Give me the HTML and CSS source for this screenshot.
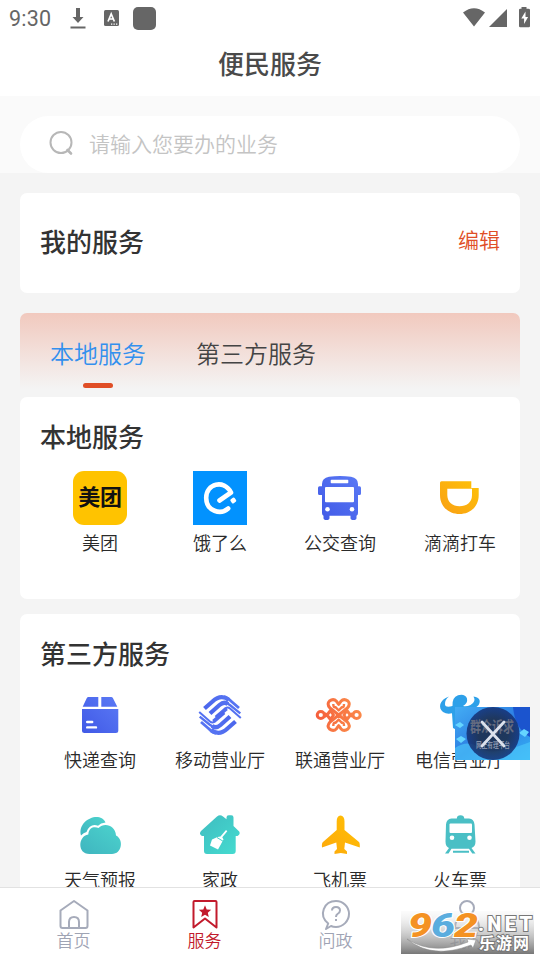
FILE: index.html
```
<!DOCTYPE html>
<html lang="zh-CN">
<head>
<meta charset="utf-8">
<title>便民服务</title>
<link rel="stylesheet" href="styles.css">
</head>
<body>
<svg width="0" height="0" class="defs">
  <defs>
    <linearGradient id="blue" x1="0" y1="1" x2="1" y2="0"><stop offset="0" stop-color="#4059e6"/><stop offset="1" stop-color="#5b7af5"/></linearGradient>
    <linearGradient id="blue-line" gradientUnits="userSpaceOnUse" x1="6" y1="48" x2="48" y2="6"><stop offset="0" stop-color="#4059e6"/><stop offset="1" stop-color="#5b7af5"/></linearGradient>
    <linearGradient id="teal" x1="1" y1="0" x2="0" y2="1"><stop offset="0" stop-color="#4cd3cd"/><stop offset="1" stop-color="#3fb5bf"/></linearGradient>
    <linearGradient id="house" x1="0" y1="0" x2="1" y2="1"><stop offset="0" stop-color="#3fbcc0"/><stop offset="1" stop-color="#45dcd0"/></linearGradient>
    <linearGradient id="gold" x1="0" y1="1" x2="1" y2="0"><stop offset="0" stop-color="#f99f14"/><stop offset="1" stop-color="#fec208"/></linearGradient>
    <linearGradient id="plane" x1="0" y1="1" x2="1" y2="0"><stop offset="0" stop-color="#fda90c"/><stop offset="1" stop-color="#ffc004"/></linearGradient>
    <linearGradient id="knot" gradientUnits="userSpaceOnUse" x1="4" y1="40" x2="46" y2="14"><stop offset="0" stop-color="#f4583a"/><stop offset="1" stop-color="#fb8d4a"/></linearGradient>
    <linearGradient id="shade" x1="0" y1="0" x2="0" y2="1"><stop offset="0" stop-color="#ddd" stop-opacity=".1"/><stop offset="1" stop-color="#777"/></linearGradient>
  </defs>
</svg>
<div class="screen">
  <header class="status">
    <span class="time">9:30</span>
    <svg class="s-down" width="16" height="22" viewBox="0 0 16 22"><path d="M6 0h4v9h3.500L8 15 2.500 9H6zM.5 18.500h15v2H.5z"/></svg>
    <svg class="s-lang" width="15" height="16" viewBox="0 0 15 16"><rect width="15" height="16" rx="1.500"/><path d="M4 11.500 7.200 4l3.200 7.500M5.200 9h4" fill="none" stroke="#fff" stroke-width="1.700"/><path d="M7 13.500h1.300v1.200H7zm2.500 0h1.300v1.200H9.500zm2.500 0h1.300v1.200H12z" fill="#fff"/></svg>
    <i class="s-box"></i>
    <span class="grow"></span>
    <svg class="s-right" width="68" height="22" viewBox="0 0 68 22"><path d="M0 5.500Q11-3 22 5.500L11 19.500zM26 20 44 2v18z"/><path d="M58.500 0h5v1.800h2q1.500 0 1.500 1.200v16q0 1.200-1.200 1.200h-8.600Q56 20.200 56 19V3q0-1.200 1.200-1.200h1.300z"/><path d="m62.500 4.500-4.200 7h2.800V17l4-7h-2.600z" fill="#fff"/></svg>
  </header>
  <h1>便民服务</h1>
  <div class="search-wrap">
    <div class="search">
      <svg width="26" height="26" viewBox="0 0 26 26"><circle cx="13" cy="12.500" r="10.500"/><path d="m19.500 20 3.500 3.500" stroke-width="2.600"/></svg>
      <span>请输入您要办的业务</span>
    </div>
  </div>
  <main>
    <section class="card mine"><h2>我的服务</h2><span class="edit">编辑</span></section>
    <nav class="tabs"><span class="tab active">本地服务</span><span class="tab">第三方服务</span></nav>
    <section class="card local">
      <h2>本地服务</h2>
      <div class="grid">
        <div class="item"><span class="meituan">美团</span><b>美团</b></div>
        <div class="item"><svg viewBox="0 0 54 54"><path fill="#0292fe" d="M0 0h54v54H0z"/><path d="M26.500 29.500 38 21.500C31 8 13 12.500 13.200 27c.3 13.500 14.500 17 22 10.500" fill="none" stroke="#fff" stroke-width="4.600" stroke-linejoin="round" stroke-linecap="round"/><rect x="37.800" y="27" width="5" height="5" rx="1.300" fill="#fff" transform="rotate(-35 40.300 29.500)"/></svg><b>饿了么</b></div>
        <div class="item"><svg viewBox="0 0 54 54"><path fill="url(#blue)" d="M16 5.800Q27 4 38 5.800 45 7 45 13v2.300h1.500Q48 15.300 48 17v5.500q0 1.500-1.500 1.500H45v18q0 2-1.500 2.700V47q0 2-3 2t-3-2v-2.300h-21V47q0 2-3 2t-3-2v-2.300Q9 44 9 42V24H6.500Q5 24 5 22.500V17q0-1.700 1.500-1.700H9V13q0-6 7-7.200z"/><path fill="#fff" d="M18.500 8.700h16q.8 0 .8.800v2q0 .8-.8.800h-16q-.8 0-.8-.8v-2q0-.8.800-.8zM13 16h27q1 0 1 1v13.300q0 1-1 1H13q-1 0-1-1V17q0-1 1-1z"/><circle cx="14.500" cy="38.300" r="2.300" fill="#fff"/><circle cx="39" cy="38.300" r="2.300" fill="#fff"/></svg><b>公交查询</b></div>
        <div class="item"><svg viewBox="0 0 54 54"><path fill="url(#gold)" d="M8.500 10.300h29.800v6.700h7.400v7C45.700 36 37 43 26.500 43S7 36 7 24V11.800q0-1.500 1.500-1.500z"/><path fill="#fff" d="M14.300 17.700H39V24c0 7.500-5.500 11.300-12.500 11.300S14.300 31 14.300 24z"/></svg><b>滴滴打车</b></div>
      </div>
    </section>
    <section class="card third">
      <h2>第三方服务</h2>
      <div class="grid">
        <div class="item"><svg viewBox="0 0 54 54"><path fill="url(#blue)" d="M15.500 9h9.800v9.700H9.700l4-8.500Q14.300 9 15.500 9zM28.300 9h9.900q1.200 0 1.800 1.200l4.300 8.500h-16zM9 21h36.300v21.500q0 2.500-2.500 2.500H11.500Q9 45 9 42.500z"/><path d="M14.200 34h5M14.200 39.400h8.800" stroke="#fff" stroke-width="2.400" stroke-linecap="round"/></svg><b>快递查询</b></div>
        <div class="item"><svg viewBox="0 0 54 54"><defs><g id="strands"><path stroke-width="4.200" d="m11.500 20.500 8-7Q28 5.500 36 12"/><path stroke-width="2.800" d="M31 8.500q4 1 7.500 5L46 20"/><path stroke-width="4.200" d="m17 25.500 9.500-8.500q4.500-4 8.500-1"/><path stroke-width="2.300" d="m33.500 14.800 4 2.700 9.800 7.800"/><path stroke-width="4" d="m23 29.500 10.500-9"/><path stroke-width="2" d="m32.500 20.500q2-2 4.500 0l10.800 9.500"/></g></defs><g fill="none" stroke="url(#blue-line)"><use href="#strands"/><use href="#strands" transform="rotate(180 27 27)"/></g></svg><b>移动营业厅</b></div>
        <div class="item"><svg viewBox="0 0 54 54"><defs><g id="heart"><path d="M25.700 27 17 20q-3.500-4-.5-7 4-3 7 .3l2.200 3 2.200-3q3-3.300 7-.3 3 3-.5 7z"/><path stroke-width="2.400" d="M20.300 16q0 4 2.200 3.200l3.200 3.300 3.200-3.300Q31 20 31 16"/></g></defs><g fill="none" stroke="url(#knot)" stroke-width="3" stroke-linejoin="round"><use href="#heart"/><use href="#heart" transform="matrix(1 0 0 -1 0 54)"/><circle cx="7.800" cy="27" r="3.600"/><circle cx="43.600" cy="27" r="3.600"/><path d="m11.500 25.500 2.500 1.500-2.500 1.500M17.500 22.500 14 27l3.500 4.500 3-4.500zM39.900 25.500 37.400 27l2.500 1.500M33.900 22.500l3.500 4.500-3.500 4.500-3-4.500z"/></g></svg><b>联通营业厅</b></div>
        <div class="item"><svg viewBox="0 0 54 54"><path fill="#2da0e9" d="M16 8.500C6 12 5 20 10 24q4 2.500 9 1.200L20 40l10 5 4-24C42 22 48 17 46.500 12q-1-3-6-3.500 3 5-3 8.500-4 2-7.500 1Q35 15 34 10.500 32 5.500 25 7.300q-6 2-5.500 10.700-7 2-7.500-1.500Q11.500 12 16 8.500z"/></svg><b>电信营业厅</b></div>
        <div class="item"><svg viewBox="0 0 54 54"><path fill="url(#teal)" d="M8 27.500C4 12 27 2.500 32.500 14.500q-5 .5-7.500 3.200-8-2.700-11.500 6.300-3 .7-5.500 3.500z"/><path fill="url(#teal)" d="M16.500 46C4 46 5 28 15.300 26.500 16 18.500 22 18.500 25.500 20c5.500-6 17-3 17.500 7.500C51 31.500 49 46 39 46z"/></svg><b>天气预报</b></div>
        <div class="item"><svg viewBox="0 0 54 54"><path fill="url(#house)" d="M24 8.500q3-2.500 6 0l3.500 2.800V9.500q0-2.200 2.300-2.200h2.500q2.200 0 2.200 2.200V18l5.700 5.500q1.500 2.500-1.700 4.500h-1.800v15q0 3-3 3H14q-3 0-3-3V28H9Q5.500 26 8 23z"/><path fill="#fff" d="m33 22 1.300 1.300-5 6 1.200 2.200-3 5.500L25 41.500 17 37.500l2-6 5.500-2.500 3-.5z"/><path d="m24 29.500 6.500 4" stroke="#44cfc8"/></svg><b>家政</b></div>
        <div class="item"><svg viewBox="0 0 54 54"><path fill="url(#plane)" d="M27.500 7.500q4 .5 4 6V22L46 34q1 1 .8 5.500l-14.800-5-.7 6.500 2.700 2.500V46l-6.200-1-6.300 1v-2.500l2.500-2.500-.7-6.500L9 39.500Q8.500 35 10 34l13.700-12v-8.500q0-5.500 3.800-6z"/></svg><b>飞机票</b></div>
        <div class="item"><svg viewBox="0 0 54 54"><path fill="#4abfc5" d="M23.800 10.500Q24 7.300 27.500 7.300t3.800 3.200H36q5 .5 5.500 6l1 17q0 5-4 6.500l4 5.500h-3.200L36 40.800H18.500l-3 4.700H12l4-5.500q-3.500-1.500-3.500-6.500l.5-17q.5-5.500 5.500-6zM20 42.800h16v2H20z"/><rect x="16.500" y="15.500" width="22.500" height="9.500" rx="1" fill="#fff"/><circle cx="19" cy="29.800" r="2.300" fill="#fff"/><circle cx="36.500" cy="29.800" r="2.300" fill="#fff"/></svg><b>火车票</b></div>
      </div>
    </section>
  </main>
  <footer class="bar">
    <div><svg width="34" height="32" viewBox="0 0 34 32"><path d="M3.500 11.500 17 2l13.500 9.500V27q0 2-2 2h-23q-2 0-2-2zM12 29v-6q0-5 5-5t5 5v6"/></svg>首页</div>
    <div class="on"><svg width="34" height="32" viewBox="0 0 34 32"><path d="M5.500 3q0-1 1-1h21q1 0 1 1v25.500L17 19.500 5.500 28.500z"/><path class="star" d="m17 6.200 1.700 4.200 4.500.3-3.400 3 1 4.400-3.800-2.400-3.800 2.400 1-4.400-3.400-3 4.500-.3z"/></svg>服务</div>
    <div><svg width="34" height="32" viewBox="0 0 34 32"><path d="m12 27-5 3 2.200-5.500C-1 16 5 2 17 2c7 0 13 5.500 13 12.800S24 28 17 28q-3 0-5-1zM13 11.500Q13 8 17 8t4 3.500q0 2-2.500 3.500-1.500 1-1.500 3M17 20v2"/></svg>问政</div>
    <div><svg width="34" height="32" viewBox="0 0 34 32"><circle cx="17" cy="9" r="7"/><path d="M5 29q0-12 12-12t12 12z"/></svg>我的</div>
  </footer>
  <div class="float">
    <svg width="75" height="53" viewBox="0 0 75 53">
      <defs><linearGradient id="sky" x1="0" y1="0" x2="1" y2="1"><stop offset="0" stop-color="#43adf4"/><stop offset=".5" stop-color="#2c7de2"/><stop offset="1" stop-color="#36b4f6"/></linearGradient><radialGradient id="disc"><stop offset=".55" stop-color="#1c2944" stop-opacity=".85"/><stop offset="1" stop-color="#143077" stop-opacity=".85"/></radialGradient></defs>
      <path fill="url(#sky)" d="M0 0h75v53H0z"/><path d="M58 0h17v30Q60 22 58 0z" fill="#1b54ce"/><path d="M0 41q13-9 25 0t50-6v18H0z" fill="#4dc8fa" opacity=".65"/><path d="M0 18l5-3 4 3-4 3zM1 32l5-3 5 3-5 4zM64 26l5-4 5 3-4 5z" fill="#65d5ff"/>
      <circle cx="38" cy="26.500" r="26.500" fill="url(#disc)"/>
      <text x="15" y="25" font-size="15" font-weight="700" textLength="44" lengthAdjust="spacingAndGlyphs" fill="#646b80">群众诉求</text><text x="21" y="41" font-size="8" font-weight="700" textLength="34" lengthAdjust="spacingAndGlyphs" fill="#8490a9">网上有理平台</text>
      <path d="m27 15 22 24M49 15 27 39" stroke="#dce1ec" stroke-width="2.800" stroke-linecap="round"/>
    </svg>
  </div>
  <div class="mark">
    <svg width="133" height="43" viewBox="0 0 133 43">
      <path fill="url(#shade)" d="M0 0h133v43H0z"/>
      <path d="M6 28q26 17 61 3l-1-3 9 1-3 8-2-3Q31 49 6 28z" fill="#fff" stroke="#888" stroke-width=".5"/>
      <g class="digits"><text x="7" y="26" textLength="24" lengthAdjust="spacingAndGlyphs" fill="#f49223">9</text><text x="30" y="26" textLength="24" lengthAdjust="spacingAndGlyphs" fill="#5badde">6</text><text x="53" y="26" textLength="24" lengthAdjust="spacingAndGlyphs" fill="#f49223">2</text></g>
      <text class="net" x="77" y="20" textLength="54">.NET</text>
      <text class="leyou" x="78" y="38" textLength="50">乐游网</text>
    </svg>
  </div>
</div>
</body>
</html>
```
FILE: styles.css
```
* { box-sizing: border-box; }
body { margin: 0; font-family: Roboto, "Noto Sans CJK SC", sans-serif; color: #333; }
svg { display: block; flex: none; }
.defs { position: absolute; }
.screen { position: relative; width: 540px; height: 960px; overflow: hidden; background: #f4f4f4; display: flex; flex-direction: column; }
.status { height: 36px; flex: none; background: #fff; display: flex; align-items: center; padding: 0 9px; fill: #666; color: #666; }
.time { font-size: 21.500px; letter-spacing: .2px; width: 61px; }
.s-down { margin-top: 2px; }
.s-lang { margin-left: 18px; }
.s-box { width: 23px; height: 23px; border-radius: 5px; background: #666; margin-left: 14px; }
.grow { flex: 1; }
.s-right { margin: -1px 0 0; }
h1 { margin: 0; height: 60px; flex: none; background: #fff; text-align: center; font-size: 26px; line-height: 59px; font-weight: 500; color: #4a4a4a; }
.search-wrap { height: 77px; flex: none; padding: 20px 20px 0; background: #fafafa; }
.search { height: 57px; border-radius: 29px; background: #fff; display: flex; align-items: center; gap: 15px; padding: 0 28px 3px; font-size: 21px; color: #c4c4c4; font-weight: 350; }
.search svg { fill: none; stroke: #b7b7b7; stroke-width: 2; stroke-linecap: round; }
main { flex: 1; min-height: 0; overflow: hidden; padding: 20px 20px 0; }
.card { background: #fff; border-radius: 7px; }
h2 { margin: 0; font-size: 26px; font-weight: 500; line-height: 42px; color: #333; }
.mine { height: 100px; padding: 0 20px; display: flex; align-items: center; justify-content: space-between; }
.edit { font-size: 21px; color: #e04e26; font-weight: 350; padding-bottom: 8px; }
.tabs { height: 76px; margin: 20px 0 8px; padding-left: 30px; display: flex; gap: 50px; border-radius: 7px 7px 0 0; background: linear-gradient(#f1c9be, #f4f4f4); }
.tab { font-size: 24px; line-height: 85px; font-weight: 350; color: #444; position: relative; }
.active { color: #3390ee; }
.active::after { content: ""; position: absolute; left: 33px; top: 70px; width: 30px; height: 5px; border-radius: 3px; background: #e04e26; }
.local { height: 202px; padding: 20px 0 0 20px; }
.third { height: 340px; margin-top: 15px; padding: 20px 0 0 20px; }
.grid { display: grid; grid-template-columns: repeat(4, 120px); grid-auto-rows: 120px; margin-top: 12px; }
.item { display: flex; flex-direction: column; align-items: center; }
.item > svg, .meituan { width: 54px; height: 54px; flex: none; }
.item b { font-size: 18px; line-height: 26px; font-weight: 350; margin-top: 6px; color: #2a2a2a; white-space: nowrap; }
.meituan { border-radius: 11px; background: #ffc300; color: #111; font-size: 22px; line-height: 54px; font-weight: 700; text-align: center; letter-spacing: -.3px; }
.bar { height: 73px; flex: none; background: #fff; border-top: 1px solid #e2e2e2; display: grid; grid-template-columns: repeat(4, 131px); padding: 11px 8px 0; color: #9fa4b4; font-size: 17px; line-height: 21px; font-weight: 350; }
.bar div { display: flex; flex-direction: column; align-items: center; }
.bar svg { fill: none; stroke: #a6abba; stroke-width: 2; stroke-linejoin: round; }
.bar .on { color: #c21a2c; }
.bar .on svg { stroke: #c21a2c; }
.bar .star { fill: #c21a2c; stroke: none; }
.float { position: absolute; left: 455px; top: 707px; }
.mark { position: absolute; left: 401px; top: 911px; }
.digits { font: italic 900 34px Roboto, sans-serif; stroke: #fff; stroke-width: 2px; paint-order: stroke; }
.net { font: 900 20px Roboto, sans-serif; fill: #fff; stroke: #777; stroke-width: 2px; paint-order: stroke; }
.leyou { font-size: 16px; font-weight: 700; fill: #fff; stroke: #777; stroke-width: 2px; paint-order: stroke; }
```
